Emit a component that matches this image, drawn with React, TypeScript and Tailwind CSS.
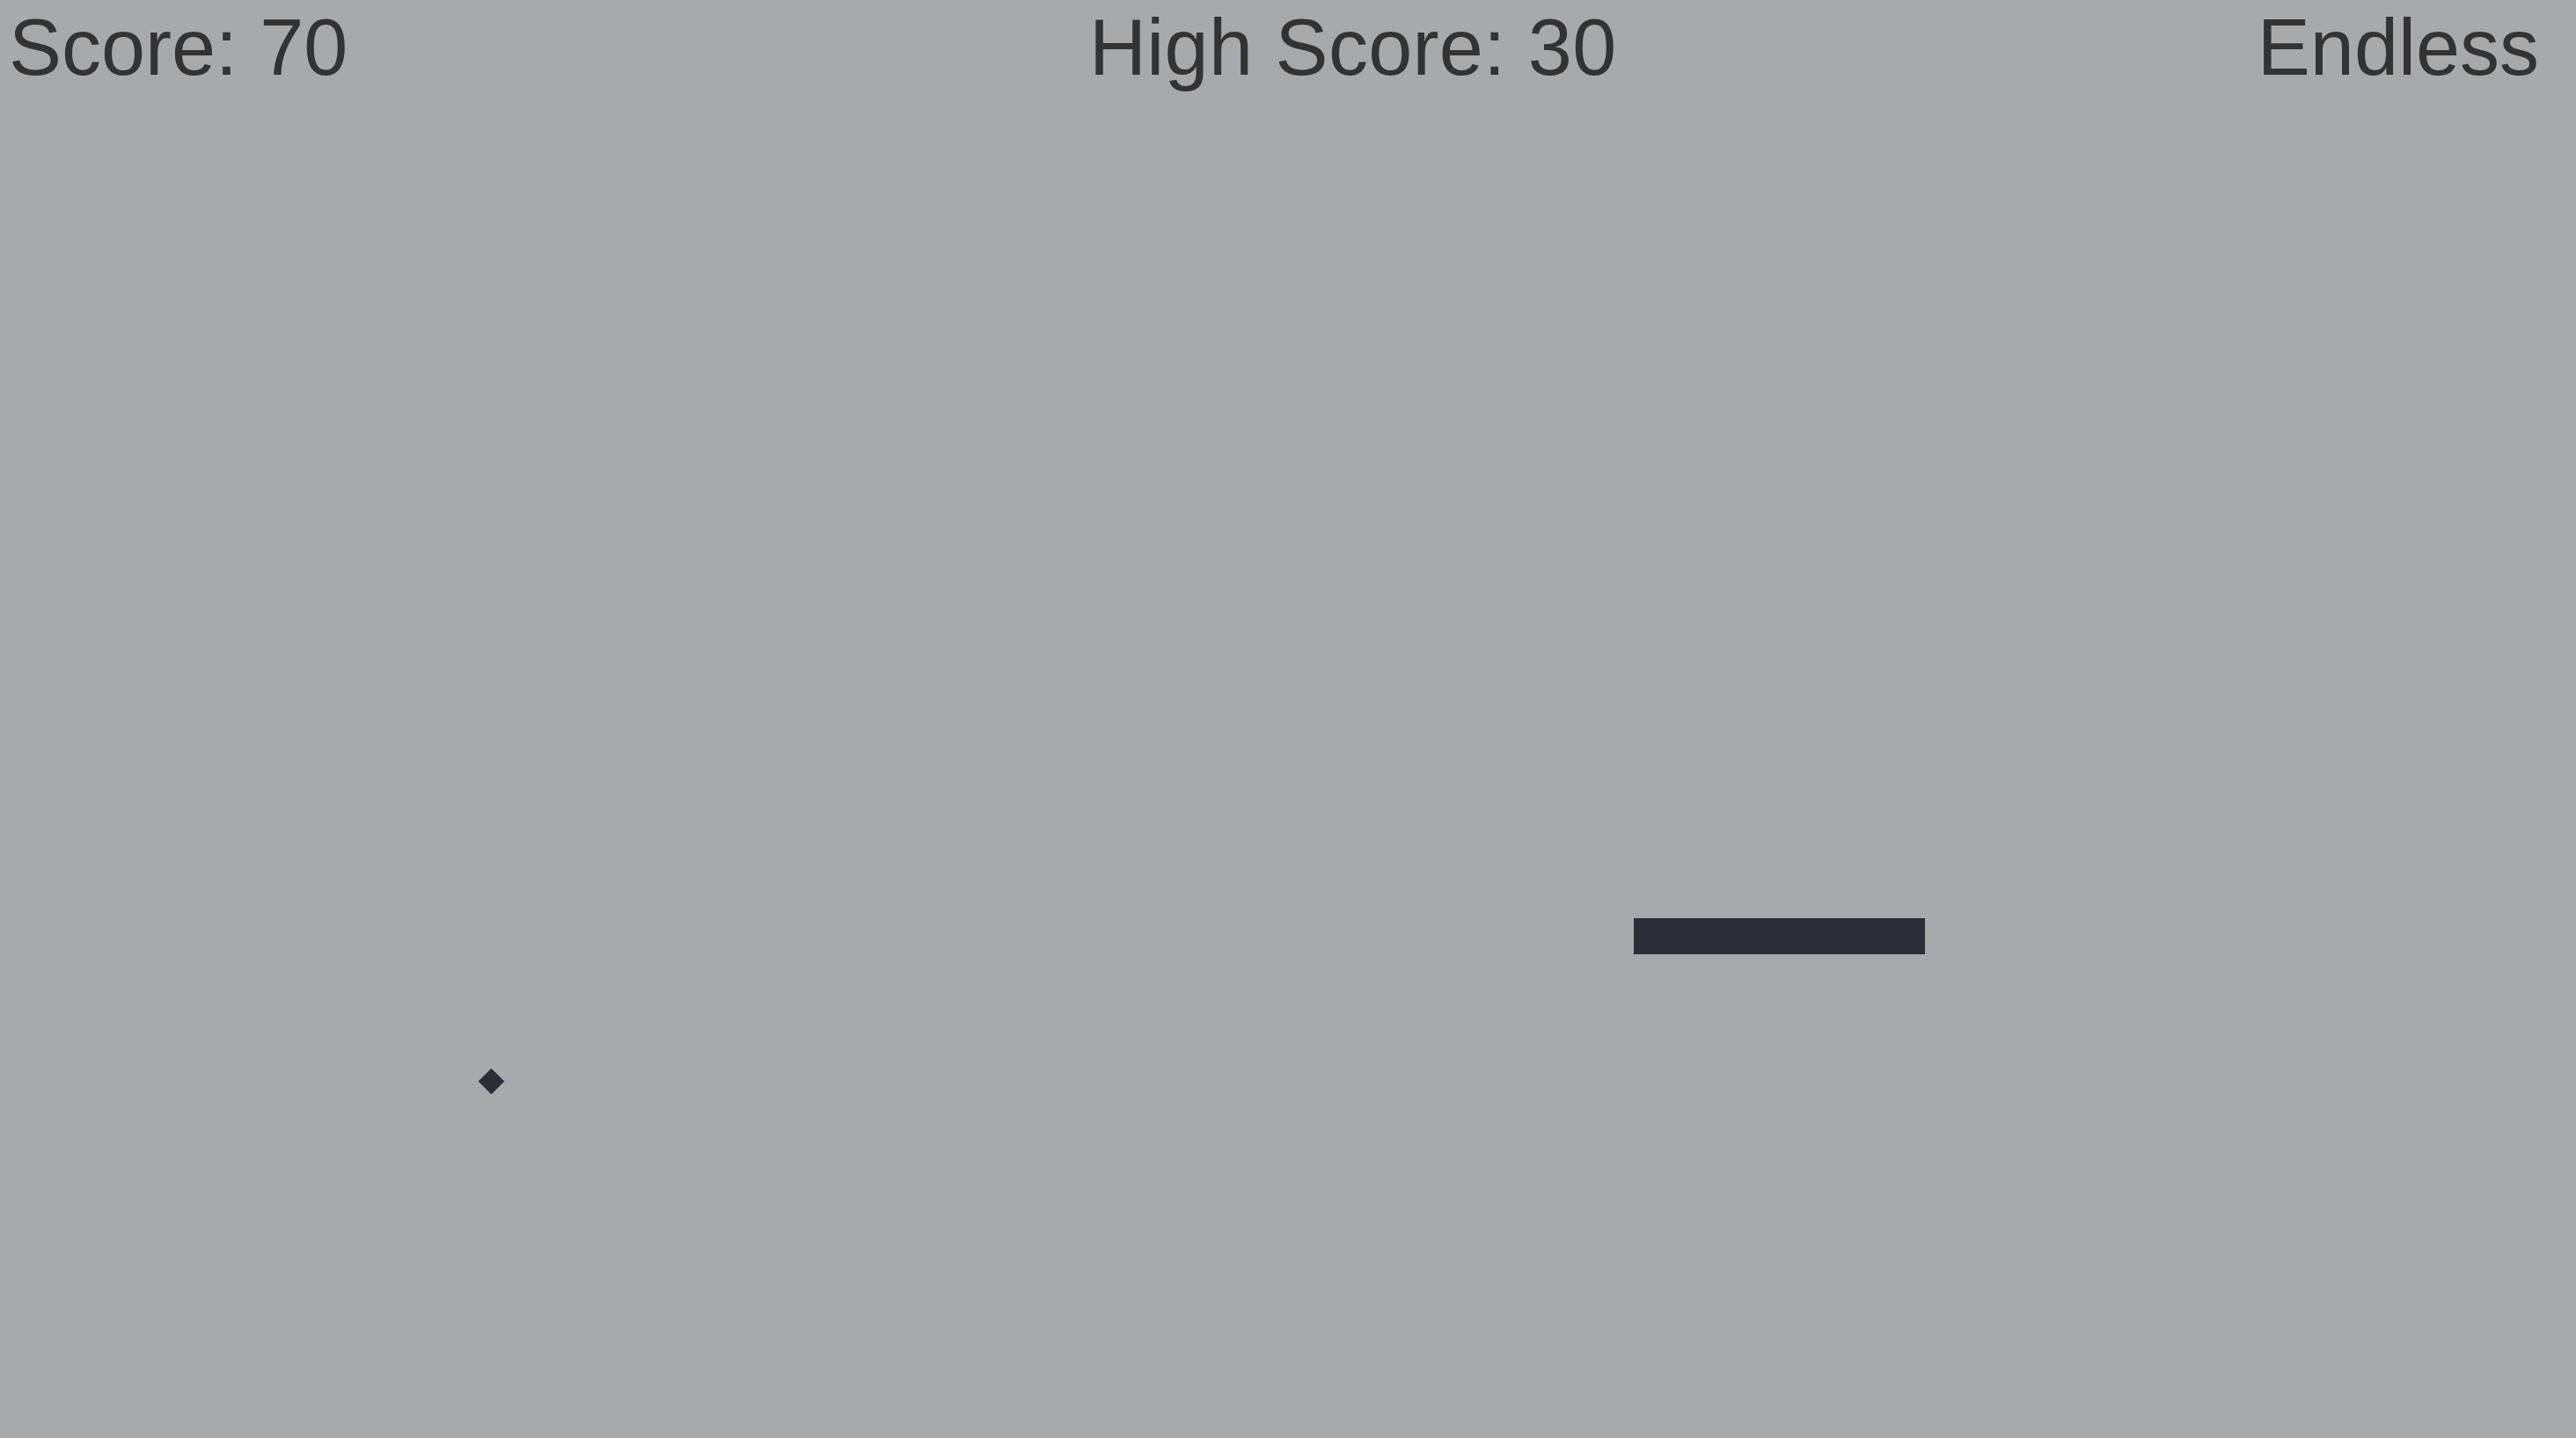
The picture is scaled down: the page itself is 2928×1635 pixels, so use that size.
export default function App() {
  const score = 70;
  const highScore = 30;
  const mode = 'Endless';

  return (
    <div
      className="relative w-full h-[1635px] overflow-hidden bg-[#a8a9ab] text-[#333333]"
      style={{ fontFamily: '"Liberation Sans", Arial, sans-serif' }}
    >
      {/* HUD */}
      <div className="flex items-start pt-[9px] pl-[10px] pr-[42px] text-[90px] leading-none">
        <div className="w-[1228px] shrink-0">Score: {score}</div>
        <div className="tracking-[0.3px]">High Score: {highScore}</div>
        <div className="ml-auto">{mode}</div>
      </div>

      {/* paddle */}
      <div className="absolute left-[1857px] top-[1044px] w-[331px] h-[41px] bg-[#2b2e36]" />

      {/* ball */}
      <div className="absolute left-[548px] top-[1219px] w-[21px] h-[21px] rotate-45 bg-[#2b2e36]" />
    </div>
  );
}
